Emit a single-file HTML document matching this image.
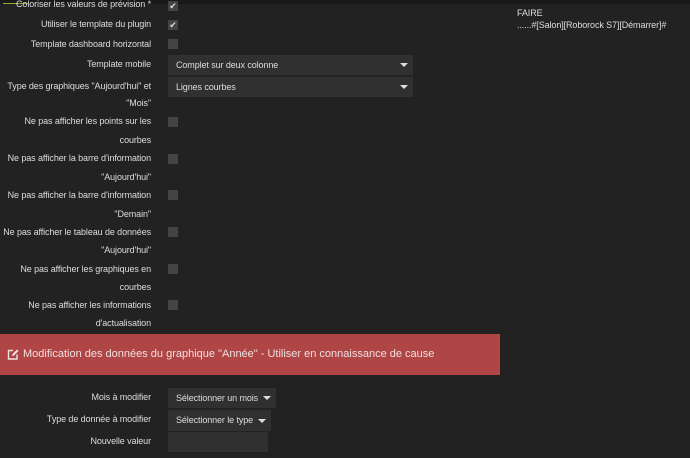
<!DOCTYPE html><html><head><meta charset="utf-8"><style>
body{margin:0;width:690px;height:458px;background:#222;overflow:hidden;font-family:"Liberation Sans",sans-serif;color:#ddd;position:relative}
.t{position:absolute;font-size:9px;letter-spacing:-0.1px;white-space:nowrap}
.l{right:539px;text-align:right}
.cb{position:absolute;left:168px;width:10px;height:10px;background:#444;}
.ck{color:#ddd;font-size:9px;line-height:10px;text-align:center}
.sel{position:absolute;left:168px;background:#303030;color:#ddd;font-size:9px;letter-spacing:-0.1px;box-sizing:border-box;padding-left:8px;white-space:nowrap}
.sel:after{content:"";position:absolute;right:5px;top:50%;margin-top:-2px;border-left:4px solid transparent;border-right:4px solid transparent;border-top:4px solid #ddd}
</style></head><body>
<div style="position:absolute;left:0;top:0;width:690px;height:4px;background:#191919"></div>
<div style="position:absolute;left:3px;top:3px;width:25px;height:1px;background:#9a3"></div>
<div class="t l" style="top:-1px">Coloriser les valeurs de prévision *</div>
<div class="cb ck" style="top:1px">✔</div>
<div class="t l" style="top:19px">Utiliser le template du plugin</div>
<div class="cb ck" style="top:20px">✔</div>
<div class="t l" style="top:39px">Template dashboard horizontal</div>
<div class="cb" style="top:39px"></div>
<div class="t l" style="top:59px">Template mobile</div>
<div class="sel" style="top:55px;width:245px;height:20px;line-height:20px">Complet sur deux colonne</div>
<div class="t l" style="top:81px">Type des graphiques "Aujourd'hui" et</div>
<div class="t l" style="top:98px">"Mois"</div>
<div class="sel" style="top:77px;width:245px;height:20px;line-height:20px">Lignes courbes</div>
<div class="t l" style="top:116px">Ne pas afficher les points sur les</div><div class="t l" style="top:135px">courbes</div><div class="cb" style="top:117px"></div>
<div class="t l" style="top:153px">Ne pas afficher la barre d'information</div><div class="t l" style="top:172px">"Aujourd'hui"</div><div class="cb" style="top:154px"></div>
<div class="t l" style="top:190px">Ne pas afficher la barre d'information</div><div class="t l" style="top:209px">"Demain"</div><div class="cb" style="top:190px"></div>
<div class="t l" style="top:227px">Ne pas afficher le tableau de données</div><div class="t l" style="top:245px">"Aujourd'hui"</div><div class="cb" style="top:227px"></div>
<div class="t l" style="top:264px">Ne pas afficher les graphiques en</div><div class="t l" style="top:282px">courbes</div><div class="cb" style="top:264px"></div>
<div class="t l" style="top:300px">Ne pas afficher les informations</div><div class="t l" style="top:318px">d'actualisation</div><div class="cb" style="top:300px"></div>
<div style="position:absolute;left:0;top:334px;width:500px;height:41px;background:#b04545;color:#f0e0e0;font-size:11px;line-height:41px;padding-left:23px;box-sizing:border-box;white-space:nowrap">Modification des données du graphique "Année" - Utiliser en connaissance de cause
<svg style="position:absolute;left:7px;top:15px" width="12" height="11" viewBox="0 0 12 11"><path d="M6 1.5H1.5V10H10V5.5" fill="none" stroke="#f0e0e0" stroke-width="1.4"/><path d="M5 7L5.5 5 10 0.5 11.5 2 7 6.5Z" fill="#f0e0e0"/></svg></div>
<div class="t l" style="top:392px">Mois à modifier</div>
<div class="sel" style="top:388px;width:108px;height:20px;line-height:20px">Sélectionner un mois</div>
<div class="t l" style="top:414px">Type de donnée à modifier</div>
<div class="sel" style="top:410px;width:103px;height:21px;line-height:21px">Sélectionner le type</div>
<div class="t l" style="top:436px">Nouvelle valeur</div>
<div style="position:absolute;left:168px;top:432px;width:100px;height:20px;background:#303030"></div>
<div class="t" style="left:517px;top:8px">FAIRE</div>
<div class="t" style="left:517px;top:20px">......#[Salon][Roborock S7][Démarrer]#</div>
</body></html>
